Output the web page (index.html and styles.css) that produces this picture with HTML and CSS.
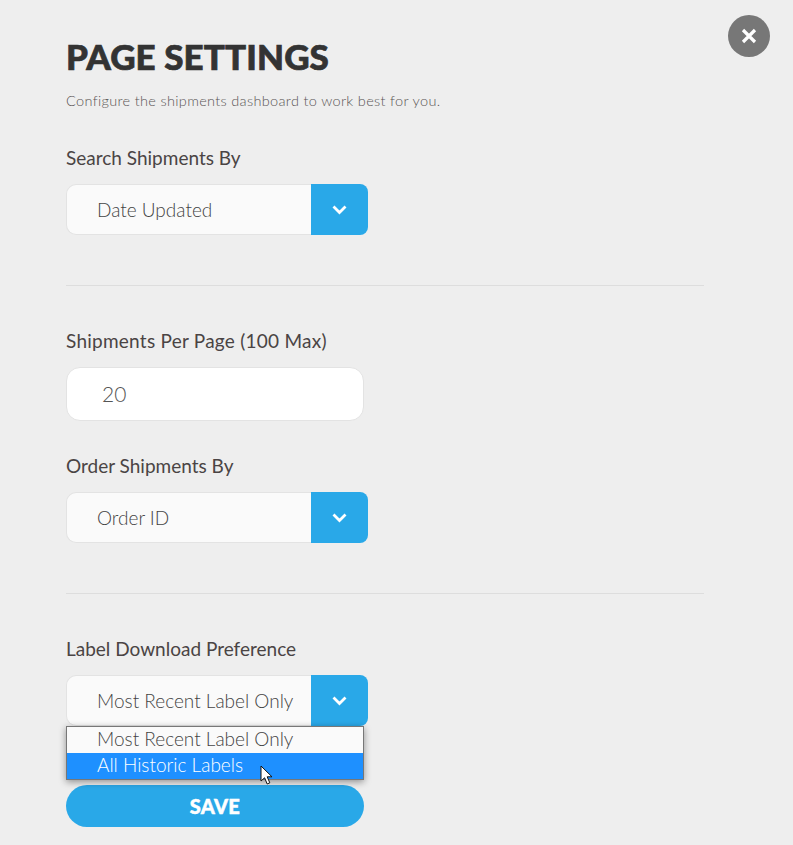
FILE: index.html
```html
<!DOCTYPE html>
<html lang="en">
<head>
<meta charset="utf-8">
<title>Page Settings</title>
<link rel="stylesheet" href="styles.css">
</head>
<body>
<button class="close" aria-label="Close">
  <svg width="16" height="16" viewBox="0 0 16 16"><path d="M2 2L14 14M14 2L2 14" stroke="#fff" stroke-width="3.2" fill="none"/></svg>
</button>
<main class="panel">
  <h1 class="title">PAGE SETTINGS</h1>
  <p class="subtitle">Configure the shipments dashboard to work best for you.</p>

  <div class="label label-first">Search Shipments By</div>
  <div class="select">
    <div class="select-value">Date Updated</div>
    <div class="select-arrow"><svg width="15" height="10" viewBox="0 0 15 10"><path d="M1.5 1.5L7.5 7.5L13.5 1.5" stroke="#fff" stroke-width="2.8" fill="none"/></svg></div>
  </div>

  <hr class="divider">

  <div class="label label-wide">Shipments Per Page (100 Max)</div>
  <div class="input">20</div>

  <div class="label label-second">Order Shipments By</div>
  <div class="select">
    <div class="select-value">Order ID</div>
    <div class="select-arrow"><svg width="15" height="10" viewBox="0 0 15 10"><path d="M1.5 1.5L7.5 7.5L13.5 1.5" stroke="#fff" stroke-width="2.8" fill="none"/></svg></div>
  </div>

  <hr class="divider">

  <div class="label">Label Download Preference</div>
  <div class="select-wrap">
    <div class="select">
      <div class="select-value">Most Recent Label Only</div>
      <div class="select-arrow"><svg width="15" height="10" viewBox="0 0 15 10"><path d="M1.5 1.5L7.5 7.5L13.5 1.5" stroke="#fff" stroke-width="2.8" fill="none"/></svg></div>
    </div>
    <ul class="menu">
      <li class="option">Most Recent Label Only</li>
      <li class="option option-active">All Historic Labels</li>
    </ul>
    <svg class="cursor" width="14" height="21" viewBox="0 0 14 21"><path d="M1 1V16L4.6 12.8L7.2 19L9.8 17.8L7.2 11.8H12Z" fill="#fff" stroke="#111" stroke-width="1"/></svg>
  </div>
  <button class="save">SAVE</button>
</main>
</body>
</html>
```

FILE: styles.css
```css
* { box-sizing: border-box; }
html, body { margin: 0; padding: 0; }
body {
  width: 793px;
  height: 845px;
  background: #eeeeee;
  font-family: "Lato", "Liberation Sans", sans-serif;
  color: #4a4444;
  overflow: hidden;
  position: relative;
}
.close {
  position: absolute;
  left: 728px;
  top: 15px;
  width: 42px;
  height: 42px;
  border: 0;
  padding: 0;
  border-radius: 50%;
  background: #777777;
  display: flex;
  align-items: center;
  justify-content: center;
}
.panel { width: 704px; padding: 36px 0 0 66px; }
.title {
  margin: 0;
  font-size: 35px;
  line-height: 40px;
  font-weight: 900;
  color: #333333;
  letter-spacing: 0.1px;
  -webkit-text-stroke: 0.7px #333333;
}
.subtitle {
  margin: 15px 0 0;
  font-size: 14.5px;
  line-height: 20px;
  font-weight: 300;
  letter-spacing: 0.33px;
  color: #5a5555;
}
.label {
  font-size: 19px;
  line-height: 24px;
  font-weight: 400;
  color: #4a4444;
  margin-bottom: 14px;
}
.label-first { margin-top: 35px; }
.label-wide { letter-spacing: 0.25px; }
.label-second { margin-top: 33px; }
.divider {
  margin: 50px 0 43px;
  border: 0;
  height: 1px;
  background: #dddddd;
}
.select {
  display: flex;
  width: 302px;
  height: 51px;
}
.select-value {
  flex: 1;
  background: #fafafa;
  border: 1px solid #e3e3e3;
  border-right: 0;
  border-radius: 10px 0 0 10px;
  padding-left: 30px;
  font-size: 19px;
  font-weight: 300;
  line-height: 49px;
  color: #444444;
  white-space: nowrap;
  overflow: hidden;
}
.select-arrow {
  width: 57px;
  background: #29a8e8;
  border-radius: 0 8px 8px 0;
  display: flex;
  align-items: center;
  justify-content: center;
  padding-right: 1px;
}
.input {
  width: 298px;
  height: 54px;
  background: #ffffff;
  border: 1px solid #e3e3e3;
  border-radius: 14px;
  padding-left: 35px;
  font-size: 21px;
  font-weight: 300;
  line-height: 52px;
  color: #555555;
}
.select-wrap { position: relative; height: 110px; }
.menu {
  position: absolute;
  left: 0;
  top: 51px;
  width: 298px;
  margin: 0;
  padding: 0;
  list-style: none;
  background: #fafafa;
  border: 1px solid #777777;
  box-shadow: 0 2px 7px rgba(0,0,0,0.4);
}
.option {
  height: 26px;
  padding-left: 30px;
  font-size: 19px;
  font-weight: 300;
  line-height: 23px;
  color: #444444;
  white-space: nowrap;
}
.option-active { background: #1e90ff; color: #ffffff; }
.cursor { position: absolute; left: 194px; top: 90px; }
.save {
  display: block;
  width: 298px;
  height: 42px;
  border: 0;
  border-radius: 21px;
  background: #29a8e8;
  color: #ffffff;
  font-family: inherit;
  font-size: 20px;
  font-weight: 900;
  letter-spacing: 0.3px;
  -webkit-text-stroke: 0.5px #ffffff;
  padding: 0;
}
```
